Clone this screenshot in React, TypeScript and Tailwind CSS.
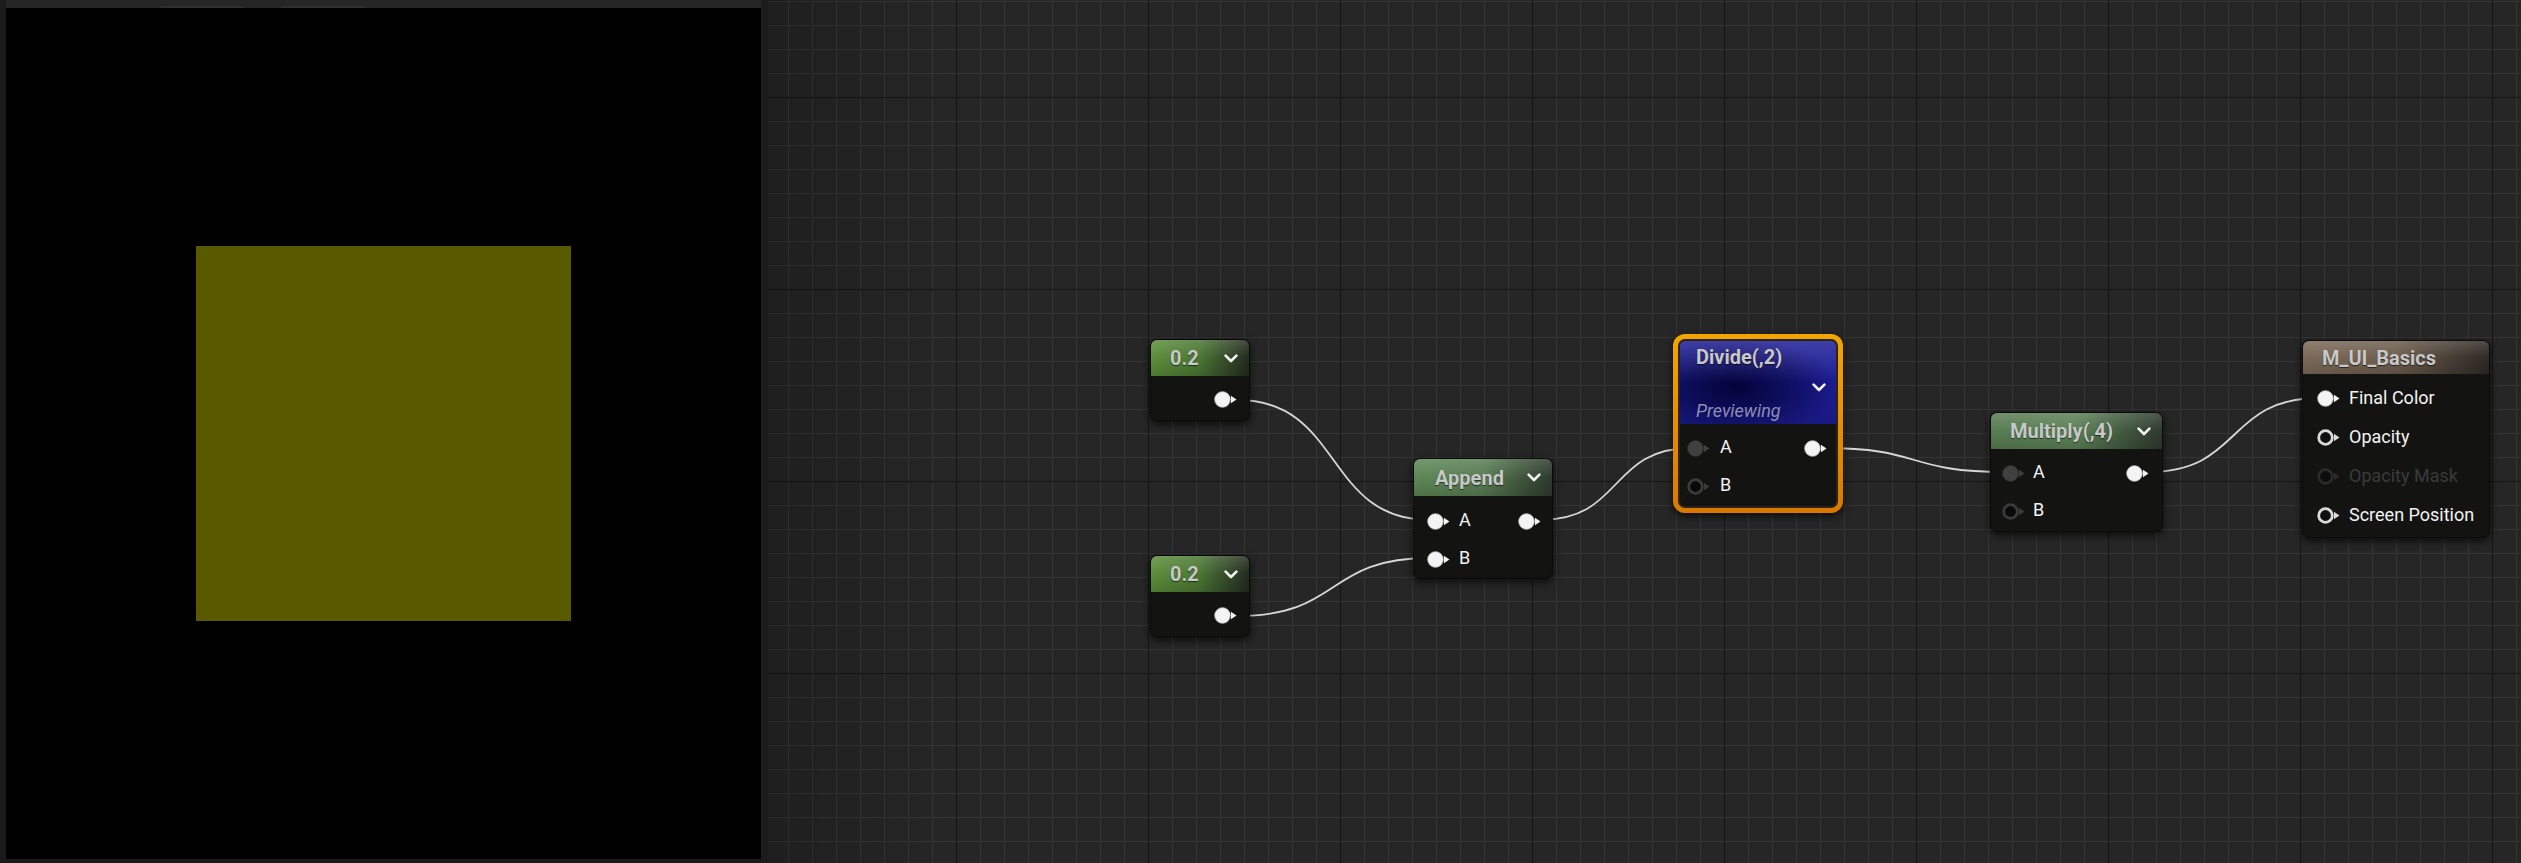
import type { ReactNode } from "react";

type PinKind = "on" | "dim" | "ring" | "ringDark" | "ringDim";

const GRID_W = 1753;
const GRID_H = 863;

const pinStyle: Record<PinKind, { fill: string; stroke: string; arrow: string; sw: number }> = {
    on: { fill: "#f4f4f4", stroke: "#c4c4c4", arrow: "#f4f4f4", sw: 0.8 },
    dim: { fill: "#404040", stroke: "#383838", arrow: "#404040", sw: 0.8 },
    ring: { fill: "#101010", stroke: "#dadada", arrow: "#dadada", sw: 2.8 },
    ringDark: { fill: "#0a0a0a", stroke: "#3b3b3b", arrow: "#3b3b3b", sw: 2.8 },
    ringDim: { fill: "#0c0c0c", stroke: "#2a2a2a", arrow: "#2a2a2a", sw: 2.8 },
};

function Pin({ kind = "on" }: { kind?: PinKind }) {
    const s = pinStyle[kind];
    return (
        <svg width="23" height="17" viewBox="0 0 23 17" className="shrink-0">
            <circle cx="8.5" cy="8.5" r={8.2 - s.sw / 2} fill={s.fill} stroke={s.stroke} strokeWidth={s.sw} />
            <polygon points="17,4.8 22.5,8.5 17,12.2" fill={s.arrow} />
        </svg>
    );
}

function Chevron() {
    return (
        <svg width="14" height="9" viewBox="0 0 14 9" className="shrink-0">
            <polyline points="1.6,1.6 7,7 12.4,1.6" fill="none" stroke="#f2f2f2" strokeWidth="2.6" strokeLinecap="round" strokeLinejoin="round" />
        </svg>
    );
}

function Gloss() {
    return <div className="absolute inset-0 bg-linear-to-b from-white/15 via-transparent to-black/15" />;
}

function Title({ children }: { children: ReactNode }) {
    return (
        <span className="relative text-[20px] font-bold leading-none text-[#c8c8c8] [text-shadow:0_1px_1px_rgba(0,0,0,0.6)]">
            {children}
        </span>
    );
}

function Label({ children, dim }: { children: ReactNode; dim?: boolean }) {
    return (
        <span className={dim ? "text-[18px] leading-none text-[#3a3a3a]" : "text-[18px] leading-none text-[#f2f2f2]"}>
            {children}
        </span>
    );
}

function wire(x1: number, y1: number, x2: number, y2: number) {
    const c = Math.max(Math.abs(x2 - x1) * 0.55, 40);
    return `M${x1},${y1} C${x1 + c},${y1} ${x2 - c},${y2} ${x2},${y2}`;
}

const wires = [
    wire(469, 400, 662, 520),
    wire(469, 616, 662, 558),
    wire(772, 520, 924, 448),
    wire(1056, 448, 1237, 472),
    wire(1380, 472, 1552, 398),
];

function Grid() {
    const vx: number[] = [];
    for (let x = 20; x < GRID_W; x += 24) vx.push(x);
    const hy: number[] = [];
    for (let y = 1; y < GRID_H; y += 24) hy.push(y);
    return (
        <svg width={GRID_W} height={GRID_H} className="absolute inset-0" shapeRendering="crispEdges">
            {vx.filter((x) => (x - 188) % 192 !== 0).map((x) => (
                <line key={"v" + x} x1={x + 0.5} y1={0} x2={x + 0.5} y2={GRID_H} stroke="#343434" strokeWidth="1" />
            ))}
            {hy.filter((y) => (y - 97) % 192 !== 0).map((y) => (
                <line key={"h" + y} x1={0} y1={y + 0.5} x2={GRID_W} y2={y + 0.5} stroke="#343434" strokeWidth="1" />
            ))}
            {vx.filter((x) => (x - 188) % 192 === 0).map((x) => (
                <line key={"V" + x} x1={x + 0.5} y1={0} x2={x + 0.5} y2={GRID_H} stroke="#141414" strokeWidth="1" />
            ))}
            {hy.filter((y) => (y - 97) % 192 === 0).map((y) => (
                <line key={"H" + y} x1={0} y1={y + 0.5} x2={GRID_W} y2={y + 0.5} stroke="#141414" strokeWidth="1" />
            ))}
        </svg>
    );
}

function ConstNode({ pos }: { pos: string }) {
    return (
        <div className={`absolute ${pos} w-[100px] h-[82px] rounded-[7px] border border-[#0a0a0a] bg-[#131412] shadow-[0_3px_8px_rgba(0,0,0,0.7)] overflow-hidden`}>
            <div className="relative h-[36px] flex items-center justify-between pl-[19px] pr-[11px] bg-linear-to-r from-[#5c8f3b] via-[#4a7633] to-[#232b1f]">
                <Gloss />
                <Title>0.2</Title>
                <span className="relative"><Chevron /></span>
            </div>
            <div className="flex justify-end pt-[15px] pr-[12px]">
                <Pin />
            </div>
        </div>
    );
}

export default function App() {
    return (
        <div className="flex h-[863px] w-[2521px] overflow-hidden bg-[#1b1b1b] font-['Roboto','Liberation_Sans',sans-serif]">
            {/* preview viewport */}
            <div className="flex w-[768px] shrink-0 flex-col pl-[6px] pr-[7px] pb-[4px]">
                <div className="relative h-[8px] bg-[#262626]">
                    <div className="absolute bottom-0 left-[154px] h-[2px] w-[84px] rounded-t bg-[#2f2f2f]" />
                    <div className="absolute bottom-0 left-[275px] h-[2px] w-[85px] rounded-t bg-[#2f2f2f]" />
                </div>
                <div className="flex flex-1 items-center justify-center bg-black">
                    <div className="h-[375px] w-[375px] bg-[#595900]" />
                </div>
            </div>

            {/* material graph */}
            <div className="relative flex-1 bg-[#262626]">
                <Grid />
                <div className="absolute inset-y-0 left-0 w-[180px] bg-linear-to-r from-black/20 to-transparent" />

                <svg width={GRID_W} height={GRID_H} className="absolute inset-0">
                    {wires.map((d, i) => (
                        <path key={i} d={d} fill="none" stroke="#d6d6d6" strokeWidth="1.8" />
                    ))}
                </svg>

                <ConstNode pos="left-[382px] top-[339px]" />
                <ConstNode pos="left-[382px] top-[555px]" />

                {/* Append */}
                <div className="absolute left-[645px] top-[458px] w-[140px] h-[121px] rounded-[7px] border border-[#0a0a0a] bg-[#131412] shadow-[0_3px_8px_rgba(0,0,0,0.7)] overflow-hidden">
                    <div className="relative h-[37px] flex items-center justify-between pl-[21px] pr-[11px] bg-linear-to-r from-[#5d8756] via-[#587e52] to-[#2e3a2d]">
                        <Gloss />
                        <Title>Append</Title>
                        <span className="relative"><Chevron /></span>
                    </div>
                    <div className="pt-[6px]">
                        <div className="flex h-[38px] items-center pl-[13px] pr-[11px]">
                            <Pin />
                            <span className="ml-[9px]"><Label>A</Label></span>
                            <span className="ml-auto"><Pin /></span>
                        </div>
                        <div className="flex h-[38px] items-center pl-[13px] pr-[11px]">
                            <Pin />
                            <span className="ml-[9px]"><Label>B</Label></span>
                        </div>
                    </div>
                </div>

                {/* Divide (selected, previewing) */}
                <div className="absolute left-[905px] top-[334px] w-[170px] h-[179px] rounded-[12px] bg-linear-to-b from-[#f2a500] to-[#d97800] p-[5px] shadow-[0_3px_8px_rgba(0,0,0,0.7)]">
                    <div className="h-full rounded-[7px] border-2 border-[#2b2416] bg-[#131412] overflow-hidden">
                        <div className="relative h-[83px] bg-[#1d1d98] pl-[16px] pr-[10px]">
                            <div className="absolute inset-0 bg-[radial-gradient(ellipse_at_35%_55%,#03033a_0%,rgba(3,3,58,0.6)_35%,transparent_75%)]" />
                            <Gloss />
                            <div className="relative pt-[6px]"><Title>Divide(,2)</Title></div>
                            <div className="relative mt-[12px] flex justify-end"><Chevron /></div>
                            <div className="relative mt-[10px] text-[18px] italic leading-none text-[#8d8db4]">Previewing</div>
                        </div>
                        <div className="pt-[5px]">
                            <div className="flex h-[38px] items-center pl-[7px] pr-[9px]">
                                <Pin kind="dim" />
                                <span className="ml-[10px]"><Label>A</Label></span>
                                <span className="ml-auto"><Pin /></span>
                            </div>
                            <div className="flex h-[38px] items-center pl-[7px] pr-[9px]">
                                <Pin kind="ringDark" />
                                <span className="ml-[10px]"><Label>B</Label></span>
                            </div>
                        </div>
                    </div>
                </div>

                {/* Multiply */}
                <div className="absolute left-[1222px] top-[412px] w-[173px] h-[120px] rounded-[7px] border border-[#0a0a0a] bg-[#131412] shadow-[0_3px_8px_rgba(0,0,0,0.7)] overflow-hidden">
                    <div className="relative h-[36px] flex items-center justify-between pl-[19px] pr-[11px] bg-linear-to-r from-[#587d52] via-[#5b8255] to-[#2e3a2d]">
                        <Gloss />
                        <Title>Multiply(,4)</Title>
                        <span className="relative"><Chevron /></span>
                    </div>
                    <div className="pt-[5px]">
                        <div className="flex h-[38px] items-center pl-[11px] pr-[13px]">
                            <Pin kind="dim" />
                            <span className="ml-[8px]"><Label>A</Label></span>
                            <span className="ml-auto"><Pin /></span>
                        </div>
                        <div className="flex h-[38px] items-center pl-[11px] pr-[13px]">
                            <Pin kind="ringDark" />
                            <span className="ml-[8px]"><Label>B</Label></span>
                        </div>
                    </div>
                </div>

                {/* Material result */}
                <div className="absolute left-[1534px] top-[340px] w-[188px] h-[198px] rounded-[7px] border border-[#0a0a0a] bg-[#131412] shadow-[0_3px_8px_rgba(0,0,0,0.7)] overflow-hidden">
                    <div className="relative h-[33px] flex items-center pl-[19px] bg-linear-to-r from-[#7b6a58] via-[#6d5e4e] to-[#2f2a25]">
                        <Gloss />
                        <Title>M_UI_Basics</Title>
                    </div>
                    <div className="pt-[5px]">
                        <div className="flex h-[39px] items-center pl-[14px]">
                            <Pin />
                            <span className="ml-[9px]"><Label>Final Color</Label></span>
                        </div>
                        <div className="flex h-[39px] items-center pl-[14px]">
                            <Pin kind="ring" />
                            <span className="ml-[9px]"><Label>Opacity</Label></span>
                        </div>
                        <div className="flex h-[39px] items-center pl-[14px]">
                            <Pin kind="ringDim" />
                            <span className="ml-[9px]"><Label dim>Opacity Mask</Label></span>
                        </div>
                        <div className="flex h-[39px] items-center pl-[14px]">
                            <Pin kind="ring" />
                            <span className="ml-[9px]"><Label>Screen Position</Label></span>
                        </div>
                    </div>
                </div>
            </div>
        </div>
    );
}
